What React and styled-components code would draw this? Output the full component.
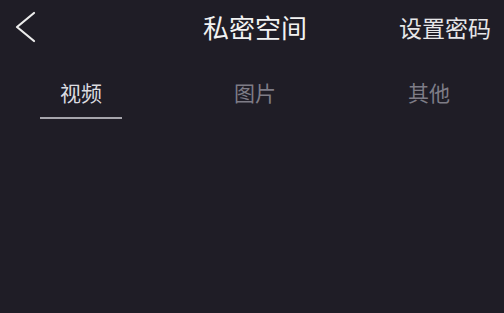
import React from "react";
import styled, { createGlobalStyle } from "styled-components";

const Global = createGlobalStyle`
  html, body { margin: 0; padding: 0; background: #1f1d26; }
  body { font-family: "Noto Sans CJK SC", "Noto Sans", sans-serif; }
  #root { width: 504px; height: 313px; overflow: hidden; background: #1f1d26; }
`;

const Page = styled.div`
  width: 504px;
  height: 313px;
  background: #1f1d26;
  display: flex;
  flex-direction: column;
`;

const Header = styled.header`
  height: 54px;
  display: grid;
  grid-template-columns: 1fr auto 1fr;
  align-items: center;
`;

const BackButton = styled.button`
  justify-self: start;
  background: none;
  border: 0;
  padding: 0 0 0 14px;
  height: 54px;
  display: flex;
  align-items: center;
  cursor: pointer;
`;

const Title = styled.h1`
  margin: 0 0 0 6px;
  font-size: 26px;
  line-height: 26px;
  font-weight: 400;
  color: #f2f2f2;
  letter-spacing: 0;
`;

const Action = styled.button`
  justify-self: end;
  background: none;
  border: 0;
  padding: 0 13px 0 0;
  font-family: inherit;
  font-size: 23px;
  line-height: 23px;
  font-weight: 400;
  color: #e6e6e8;
`;

const Tabs = styled.nav`
  display: grid;
  grid-template-columns: repeat(3, 174px);
  margin-left: -6px;
`;

const Tab = styled.div`
  display: flex;
  flex-direction: column;
  align-items: center;
  padding-top: 28px;
`;

const TabLabel = styled.span`
  font-size: 21px;
  line-height: 21px;
  color: ${(p) => (p.$active ? "#dcdce0" : "#7e7c86")};
`;

const Indicator = styled.span`
  margin-top: 14px;
  width: 82px;
  height: 2px;
  background: ${(p) => (p.$active ? "#a6a5ac" : "transparent")};
`;

const tabs = ["视频", "图片", "其他"];

export default function App() {
  return (
    <Page>
      <Global />
      <Header>
        <BackButton aria-label="返回">
          <svg width="22" height="32" viewBox="0 0 22 32">
            <path d="M20 2 L3 16 L20 30" fill="none" stroke="#ececec" strokeWidth="2.2" strokeLinecap="round" strokeLinejoin="round" />
          </svg>
        </BackButton>
        <Title>私密空间</Title>
        <Action>设置密码</Action>
      </Header>
      <Tabs>
        {tabs.map((t, i) => (
          <Tab key={t}>
            <TabLabel $active={i === 0}>{t}</TabLabel>
            <Indicator $active={i === 0} />
          </Tab>
        ))}
      </Tabs>
    </Page>
  );
}
